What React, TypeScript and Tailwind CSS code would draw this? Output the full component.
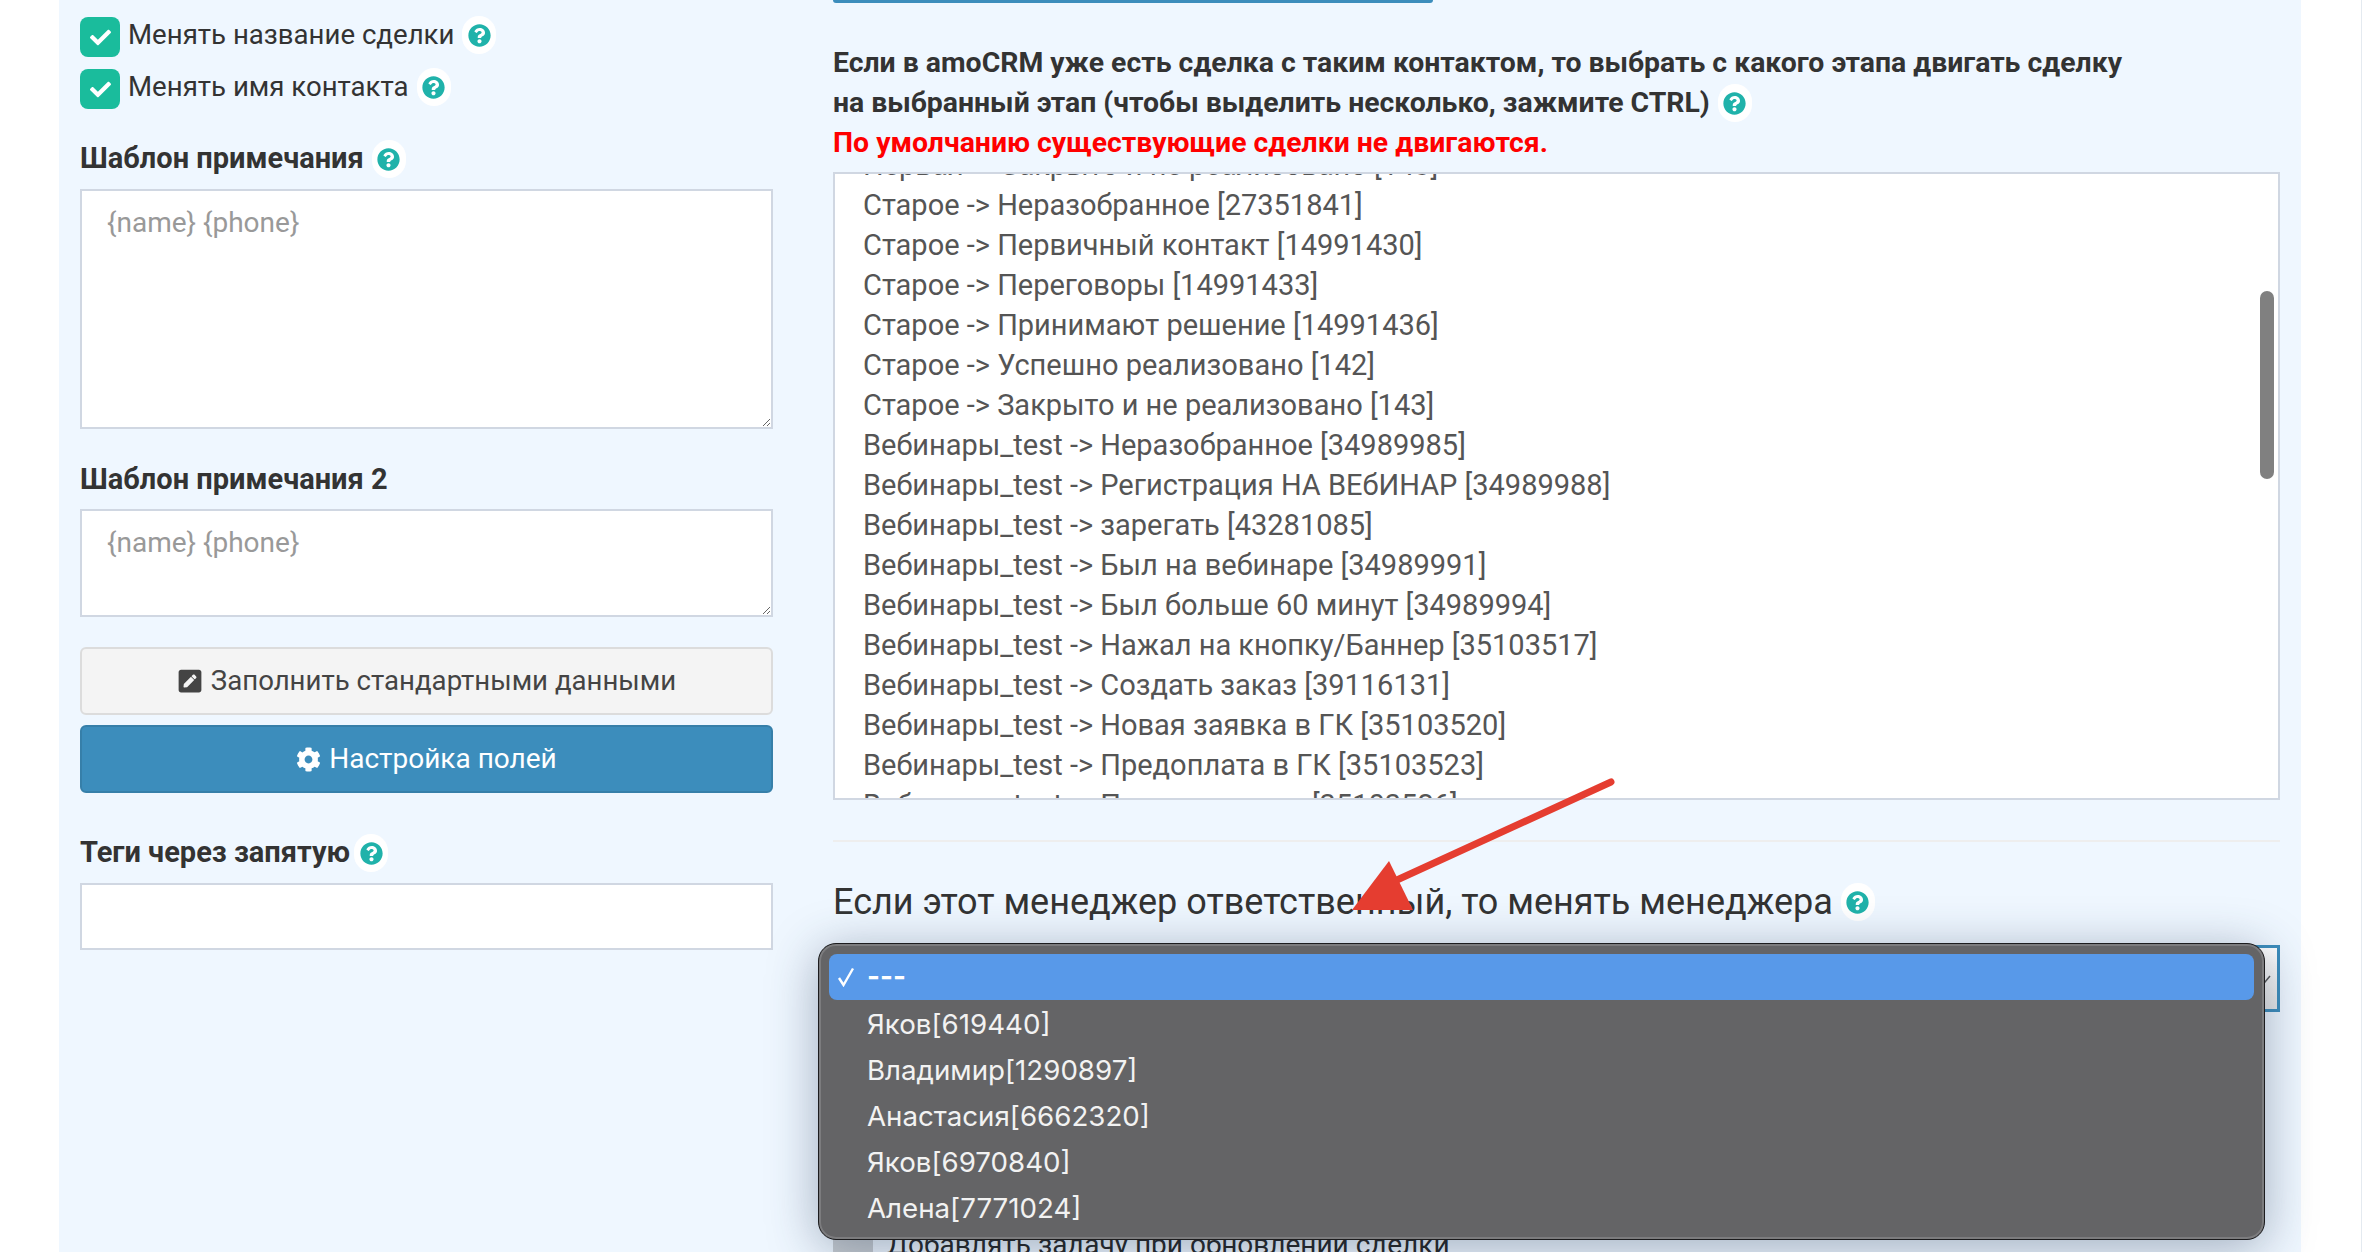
import { FaCheck, FaCog, FaPenSquare, FaQuestionCircle } from "react-icons/fa";

const STAGES = [
  "Первая -> Закрыто и не реализовано [143]",
  "Старое -> Неразобранное [27351841]",
  "Старое -> Первичный контакт [14991430]",
  "Старое -> Переговоры [14991433]",
  "Старое -> Принимают решение [14991436]",
  "Старое -> Успешно реализовано [142]",
  "Старое -> Закрыто и не реализовано [143]",
  "Вебинары_test -> Неразобранное [34989985]",
  "Вебинары_test -> Регистрация НА ВЕбИНАР [34989988]",
  "Вебинары_test -> зарегать [43281085]",
  "Вебинары_test -> Был на вебинаре [34989991]",
  "Вебинары_test -> Был больше 60 минут [34989994]",
  "Вебинары_test -> Нажал на кнопку/Баннер [35103517]",
  "Вебинары_test -> Создать заказ [39116131]",
  "Вебинары_test -> Новая заявка в ГК [35103520]",
  "Вебинары_test -> Предоплата в ГК [35103523]",
  "Вебинары_test -> Полная оплата [35103526]",
];

const MANAGERS = [
  "Яков[619440]",
  "Владимир[1290897]",
  "Анастасия[6662320]",
  "Яков[6970840]",
  "Алена[7771024]",
];

function Help({ className = "" }: { className?: string }) {
  return (
    <span
      className={`inline-flex h-[38px] w-[34px] shrink-0 items-center justify-center rounded-full bg-white ${className}`}
    >
      <FaQuestionCircle className="text-[23px] text-[#20b2aa]" />
    </span>
  );
}

function CheckRow({ label }: { label: string }) {
  return (
    <div className="flex h-10 items-center">
      <span className="flex h-10 w-10 items-center justify-center rounded-lg bg-[#1abc9c]">
        <FaCheck className="text-[21px] text-white" />
      </span>
      <span className="mb-1 ml-2 text-[27.6px] leading-9 text-[#333]">{label}</span>
      <Help className="mb-1 ml-2" />
    </div>
  );
}

function Note({ rows, height }: { rows: number; height: string }) {
  return (
    <textarea
      rows={rows}
      placeholder="{name} {phone}"
      className={`block w-full border-2 border-[#d0d7e2] bg-white px-[25px] py-[14px] text-[28px] leading-9 outline-none placeholder:text-[#999] ${height}`}
    />
  );
}

export default function App() {
  return (
    <div className="relative h-[1252px] overflow-hidden bg-white font-['Roboto','Noto_Sans',sans-serif] text-[#333]">
      <div className="absolute inset-y-0 right-0 w-px bg-[#e4eaf0]" />
      <div className="ml-[59px] flex h-full w-[2242px] gap-[60px] bg-[#eff7ff] px-[21px]">
        <div className="w-[693px] shrink-0 pt-[17px]">
          <div className="flex flex-col gap-3">
            <CheckRow label="Менять название сделки" />
            <CheckRow label="Менять имя контакта" />
          </div>
          <div className="mt-[31px] flex h-[38px] items-center text-[29px] font-bold">
            Шаблон примечания
            <Help className="ml-2" />
          </div>
          <div className="mt-[11px]">
            <Note rows={6} height="h-[240px]" />
          </div>
          <div className="mt-[33px] flex h-9 items-center text-[29px] font-bold">Шаблон примечания 2</div>
          <div className="mt-[11px]">
            <Note rows={2} height="h-[108px]" />
          </div>
          <button className="mt-[30px] flex h-[68px] w-full items-center justify-center gap-2 rounded-md border-2 border-[#dcdcdc] bg-[#f4f4f4] text-[27.6px] text-[#444]">
            <FaPenSquare className="text-[26px]" />
            Заполнить стандартными данными
          </button>
          <button className="mt-[10px] flex h-[68px] w-full items-center justify-center gap-2 rounded-md border-2 border-[#367fa9] bg-[#3c8dbc] text-[28px] text-white">
            <FaCog className="text-[25px]" />
            Настройка полей
          </button>
          <div className="mt-[41px] flex h-[38px] items-center text-[29px] font-bold">
            Теги через запятую
            <Help className="ml-1" />
          </div>
          <input className="mt-[11px] block h-[67px] w-full border-2 border-[#d0d7e2] bg-white" />
        </div>

        <div className="relative w-[1447px] shrink-0">
          <div className="h-[3px] w-[600px] rounded-b bg-[#3c8dbc]" />
          <div className="mt-10 text-[28.4px] font-bold leading-10">
            <div>Если в amoCRM уже есть сделка с таким контактом, то выбрать с какого этапа двигать сделку</div>
            <div className="flex items-center">
              на выбранный этап (чтобы выделить несколько, зажмите CTRL)
              <Help className="ml-2" />
            </div>
            <div className="text-[#f00]">По умолчанию существующие сделки не двигаются.</div>
          </div>
          <div className="relative mt-[9px] h-[628px] overflow-hidden border-2 border-[#d0d7e2] bg-white px-[28px] text-[29px] leading-10 text-[#555]">
            <div className="-mt-[29px]">
              {STAGES.map((s) => (
                <div key={s} className="h-10 whitespace-nowrap">
                  {s}
                </div>
              ))}
            </div>
            <div className="absolute right-1 top-[117px] h-[188px] w-3.5 rounded-full bg-[#808080]" />
          </div>
          <div className="mt-10 h-0.5 bg-[#eeeeee]" />
          <div className="mt-[38px] flex h-[44px] items-center text-[36px] leading-none">
            Если этот менеджер ответственный, то менять менеджера
            <Help className="ml-2" />
          </div>
          <div className="mt-[21px] flex h-[67px] items-center justify-end border-[3px] border-[#3c8dbc] bg-gradient-to-b from-white to-[#e8e8e8] pr-1.5 text-[#555]">
            <svg width="10" height="8" viewBox="0 0 10 8">
              <path d="M1 4l3 3 5-6" fill="none" stroke="currentColor" strokeWidth="1.5" />
            </svg>
          </div>
          <div className="mt-[213px] flex items-start gap-3.5">
            <span className="mt-[7px] h-10 w-10 rounded-lg bg-[#c6cbd0]" />
            <span className="text-[28px] leading-10 text-[#222]">Добавлять задачу при обновлении сделки</span>
          </div>

          {/* native select popup */}
          <div className="absolute left-[-15px] top-[943px] h-[297px] w-[1447px] rounded-[18px] border border-[#1c1c1e] bg-[#646466] p-2.5 font-['Inter','Roboto',sans-serif] text-[27.7px] text-[#f2f2f2] shadow-[0_8px_50px_rgba(40,60,90,0.4)] ring-2 ring-inset ring-[#7c7c7e]">
            <div className="flex h-[46px] items-center rounded-lg bg-[#5899e9] pl-2 text-white">
              <svg className="mr-[11px] shrink-0" width="19" height="20" viewBox="0 0 19 20">
                <path d="M2 11l4.5 7L16 1.5" fill="none" stroke="currentColor" strokeWidth="2.4" />
              </svg>
              <span className="font-bold">---</span>
            </div>
            <div className="mt-0.5 pl-[38px]">
              {MANAGERS.map((m) => (
                <div key={m} className="flex h-[46px] items-center">
                  {m}
                </div>
              ))}
            </div>
          </div>

          <svg className="pointer-events-none absolute left-[500px] top-[770px]" width="300" height="150" viewBox="0 0 300 150">
            <path d="M278 12 L53 115" stroke="#e53d30" strokeWidth="7" strokeLinecap="round" fill="none" />
            <polygon points="56,91 80,140 19,140" fill="#e53d30" />
          </svg>
        </div>
      </div>
    </div>
  );
}
